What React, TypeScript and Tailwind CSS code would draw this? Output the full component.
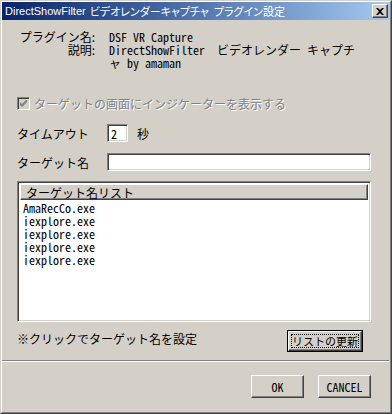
const jp = "font-['Noto_Sans_CJK_JP',sans-serif] text-[12px] leading-[13px]";
const mono = "font-['Noto_Sans_Mono_CJK_JP','DejaVu_Sans_Mono',monospace] text-[12px] leading-[13px]";

const raised =
  "border border-t-white border-l-white border-r-[#404040] border-b-[#404040] shadow-[inset_-1px_-1px_0_#808080] bg-[#d4d0c8]";
const sunken =
  "border border-t-[#808080] border-l-[#808080] border-r-white border-b-white shadow-[inset_1px_1px_0_#404040,inset_-1px_-1px_0_#d4d0c8]";

const targets = ["AmaRecCo.exe", "iexplore.exe", "iexplore.exe", "iexplore.exe", "iexplore.exe"];

export default function App() {
  return (
    <div className="w-[392px] h-[414px] bg-[#d4d0c8] border border-t-[#d4d0c8] border-l-[#d4d0c8] border-r-[#404040] border-b-[#404040] text-black">
      <div className="h-full flex flex-col border border-t-white border-l-white border-r-[#808080] border-b-[#808080]">
        {/* Title bar */}
        <div className="h-[18px] flex items-center justify-between bg-gradient-to-r from-[#0a246a] to-[#a6caf0] pl-[3px] pr-[2px]">
          <div className="text-white text-[11px] leading-[13px] whitespace-nowrap flex items-center">
            <span className="font-['Liberation_Sans',sans-serif]">DirectShowFilter</span>
            <span className="ml-[4px] font-['Noto_Sans_CJK_JP',sans-serif] [font-feature-settings:'palt']">
              ビデオレンダーキャプチャ
            </span>
            <span className="ml-[5px] font-['Noto_Sans_CJK_JP',sans-serif] [font-feature-settings:'palt']">
              プラグイン設定
            </span>
          </div>
          <button className={`${raised} w-[16px] h-[14px] flex items-center justify-center p-0`}>
            <svg width="8" height="7" viewBox="0 0 8 7">
              <path d="M0 0h2l2 2 2-2h2L5 3.5 8 7H6L4 5 2 7H0l3-3.5z" fill="#000" />
            </svg>
          </button>
        </div>

        <div className="flex-1 flex flex-col pl-[15px] pr-[19px]">
          {/* Plugin info */}
          <div className="mt-[10px] flex">
            <div className={`${jp} w-[78px] text-right`}>
              <div>プラグイン名:</div>
              <div>説明:</div>
            </div>
            <div className={`${mono} ml-[14px]`}>
              <div>DSF VR Capture</div>
              <div className="whitespace-pre">DirectShowFilter　ビデオレンダー キャプチ</div>
              <div>ャ by amaman</div>
            </div>
          </div>

          {/* Indicator checkbox (disabled) */}
          <div className="mt-[28px] flex items-center h-[13px]">
            <div className={`${sunken} w-[13px] h-[13px] bg-[#d4d0c8] flex items-center justify-center`}>
              <svg width="7" height="7" viewBox="0 0 7 7">
                <path d="M0 2v3l2 2 5-5V-1L2 4z" fill="#808080" />
              </svg>
            </div>
            <span className={`${jp} ml-[4px] text-[#808080] [text-shadow:1px_1px_0_#ffffff]`}>
              ターゲットの画面にインジケーターを表示する
            </span>
          </div>

          {/* Timeout */}
          <div className="mt-[14px] flex items-center h-[18px]">
            <span className={`${jp} w-[90px]`}>タイムアウト</span>
            <div className={`${sunken} bg-white w-[21px] h-[18px] flex items-center pl-[3px]`}>
              <span className={mono}>2</span>
            </div>
            <span className={`${jp} ml-[9px]`}>秒</span>
          </div>

          {/* Target name */}
          <div className="mt-[11px] flex items-center h-[18px]">
            <span className={`${jp} w-[90px]`}>ターゲット名</span>
            <div className={`${sunken} bg-white flex-1 h-[18px]`} />
          </div>

          {/* Target list */}
          <div className={`${sunken} mt-[10px] bg-white h-[141px] p-[2px] flex flex-col`}>
            <div className={`${raised} h-[16px] flex items-center pl-[5px]`}>
              <span className={jp}>ターゲット名リスト</span>
            </div>
            <div className="pl-[3px] pt-[1px]">
              {targets.map((t, i) => (
                <div key={i} className={mono}>
                  {t}
                </div>
              ))}
            </div>
          </div>

          {/* Note + refresh */}
          <div className="mt-[8px] flex items-center justify-between h-[22px]">
            <span className={`${jp} -mt-[6px]`}>※クリックでターゲット名を設定</span>
            <div className="border border-black mr-[8px]">
              <button className={`${raised} w-[74px] h-[20px] p-[2px] flex`}>
                <span className="flex-1 h-full flex items-center justify-center outline outline-1 outline-dotted outline-black -outline-offset-1 whitespace-nowrap font-['Noto_Sans_CJK_JP',sans-serif] text-[11px] leading-[13px]">
                  リストの更新
                </span>
              </button>
            </div>
          </div>
        </div>

        {/* Separator */}
        <div className="mt-[8px] h-[2px] border-t border-t-[#808080] border-b border-b-white mr-[1px]" />

        {/* OK / Cancel */}
        <div className="mt-[13px] flex justify-end gap-[14px] pr-[19px] mb-[14px]">
          <button className={`${raised} w-[53px] h-[23px] flex items-center justify-center`}>
            <span className={mono}>OK</span>
          </button>
          <button className={`${raised} w-[53px] h-[23px] flex items-center justify-center`}>
            <span className={mono}>CANCEL</span>
          </button>
        </div>
      </div>
    </div>
  );
}
